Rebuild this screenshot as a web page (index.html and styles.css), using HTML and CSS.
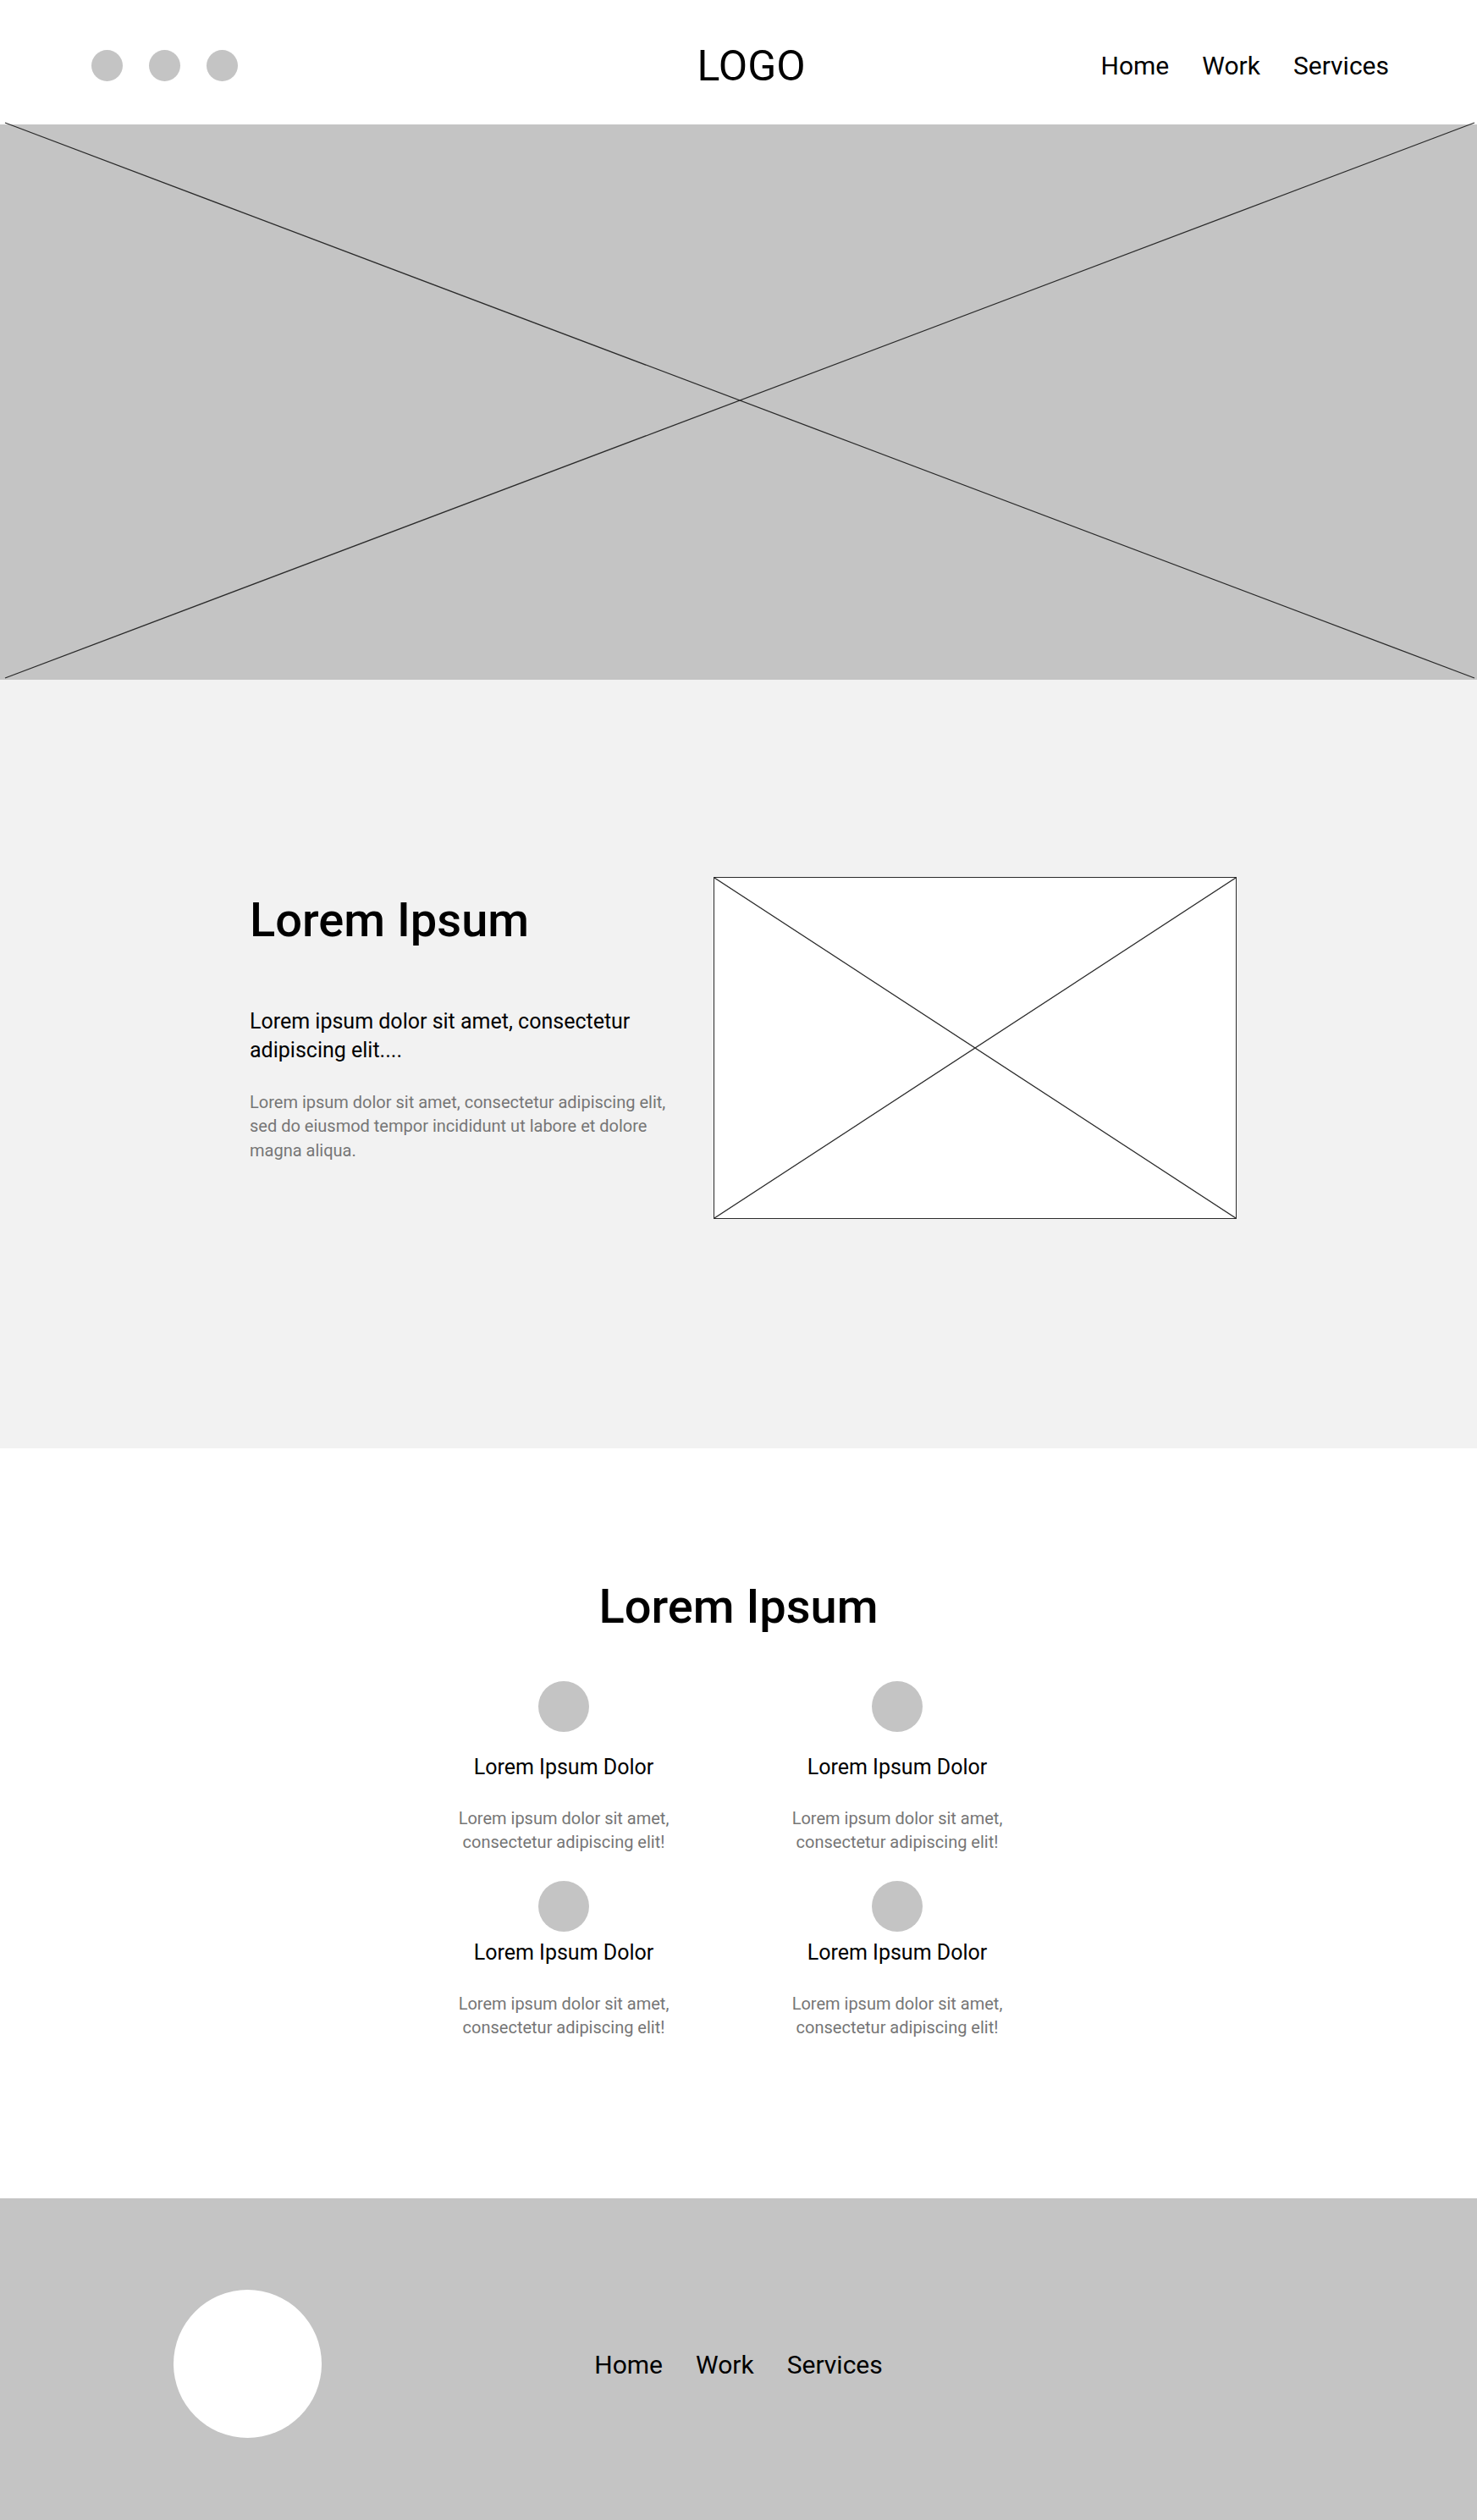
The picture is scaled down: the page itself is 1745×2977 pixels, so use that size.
FILE: index.html
```html
<!DOCTYPE html>
<html lang="en">
<head>
  <meta charset="UTF-8" />
  <meta name="viewport" content="width=device-width, initial-scale=1.0"/>
  <title>Wireframe</title>
  <link rel="stylesheet" href="styles.css">
</head>
<body>
  <header class="topbar">
    <div class="dots">
      <span class="dot"></span><span class="dot"></span><span class="dot"></span>
    </div>
    <div class="logo">LOGO</div>
    <nav class="menu">
      <a href="#">Home</a><a href="#">Work</a><a href="#">Services</a>
    </nav>
  </header>

  <section class="hero">
    <svg class="cross" viewBox="0 0 1745 656" preserveAspectRatio="none">
      <line x1="6" y1="-2" x2="1742" y2="654" />
      <line x1="6" y1="654" x2="1742" y2="-2" />
    </svg>
  </section>

  <section class="intro">
    <div class="intro-text">
      <h1>Lorem Ipsum</h1>
      <p class="lead">Lorem ipsum dolor sit amet, consectetur adipiscing elit....</p>
      <p class="muted">Lorem ipsum dolor sit amet, consectetur adipiscing elit, sed do eiusmod tempor incididunt ut labore et dolore magna aliqua.</p>
    </div>
    <div class="placeholder">
      <svg viewBox="0 0 616 402" preserveAspectRatio="none">
        <line x1="0" y1="0" x2="616" y2="402" />
        <line x1="0" y1="402" x2="616" y2="0" />
      </svg>
    </div>
  </section>

  <section class="features">
    <h2>Lorem Ipsum</h2>
    <div class="grid">
      <div class="feature">
        <span class="icon"></span>
        <h3>Lorem Ipsum Dolor</h3>
        <p>Lorem ipsum dolor sit amet, consectetur adipiscing elit!</p>
      </div>
      <div class="feature">
        <span class="icon"></span>
        <h3>Lorem Ipsum Dolor</h3>
        <p>Lorem ipsum dolor sit amet, consectetur adipiscing elit!</p>
      </div>
      <div class="feature tight">
        <span class="icon"></span>
        <h3>Lorem Ipsum Dolor</h3>
        <p>Lorem ipsum dolor sit amet, consectetur adipiscing elit!</p>
      </div>
      <div class="feature tight">
        <span class="icon"></span>
        <h3>Lorem Ipsum Dolor</h3>
        <p>Lorem ipsum dolor sit amet, consectetur adipiscing elit!</p>
      </div>
    </div>
  </section>

  <footer class="footer">
    <div class="footer-logo"><span class="badge"></span></div>
    <nav class="menu">
      <a href="#">Home</a><a href="#">Work</a><a href="#">Services</a>
    </nav>
    <div></div>
  </footer>
</body>
</html>
```

FILE: styles.css
```css
* { box-sizing: border-box; }
body {
  margin: 0; padding: 0;
  font-family: Roboto, "Liberation Sans", Arial, sans-serif;
  color: #000; background: #fff;
}
h1, h2, h3, p { margin: 0; font-weight: 400; }

/* header */
.topbar {
  height: 147px; padding: 8px 104px 0 108px;
  display: grid; grid-template-columns: 1fr auto 1fr; align-items: center;
}
.dots { display: flex; gap: 31px; }
.dot { width: 37px; height: 37px; border-radius: 50%; background: #c4c4c4; }
.logo { font-size: 50px; line-height: 1; margin-left: 26px; }
.menu { display: flex; gap: 39px; justify-self: end; }
.menu a { color: #000; text-decoration: none; font-size: 30px; line-height: 1; }

/* hero */
.hero { height: 656px; background: #c4c4c4; }
.cross { display: block; width: 100%; height: 100%; overflow: visible; }
.cross line, .placeholder line {
  stroke: #2b2b2b; stroke-width: 1.3; vector-effect: non-scaling-stroke;
}

/* intro */
.intro {
  height: 908px; background: #f2f2f2;
  display: flex; align-items: flex-start;
  padding: 233px 0 0 295px;
}
.intro-text { width: 548px; padding-top: 18px; }
.intro h1 { font-size: 56px; line-height: 66px; font-weight: 500; }
.lead { max-width: 510px; margin-top: 70px; font-size: 25px; line-height: 34px; }
.muted { max-width: 510px; margin-top: 30px; font-size: 20px; line-height: 28.3px; color: #767676; }
.placeholder {
  width: 618px; height: 404px; background: #fff; border: 1px solid #2b2b2b;
}
.placeholder svg { display: block; width: 100%; height: 100%; }

/* features */
.features { height: 886px; padding-top: 154px; text-align: center; }
.features h2 { font-size: 56px; line-height: 66px; font-weight: 500; }
.grid {
  display: grid; grid-template-columns: 280px 280px;
  justify-content: center; column-gap: 114px; row-gap: 32px;
  margin-top: 55px; padding-right: 19px;
}
.feature { display: flex; flex-direction: column; align-items: center; }
.icon { width: 60px; height: 60px; border-radius: 50%; background: #c4c4c4; }
.feature h3 { margin-top: 28px; font-size: 25px; line-height: 28px; }
.feature.tight h3 { margin-top: 11px; }
.feature p { margin-top: 32px; font-size: 20px; line-height: 28px; color: #767676; }

/* footer */
.footer {
  height: 380px; background: #c4c4c4; padding: 108px 0 97px;
  display: grid; grid-template-columns: 1fr auto 1fr; align-items: center;
}
.footer-logo { padding-left: 205px; }
.badge { display: block; width: 175px; height: 175px; border-radius: 50%; background: #fff; }
.footer .menu { justify-self: center; padding-top: 3px; }
```
